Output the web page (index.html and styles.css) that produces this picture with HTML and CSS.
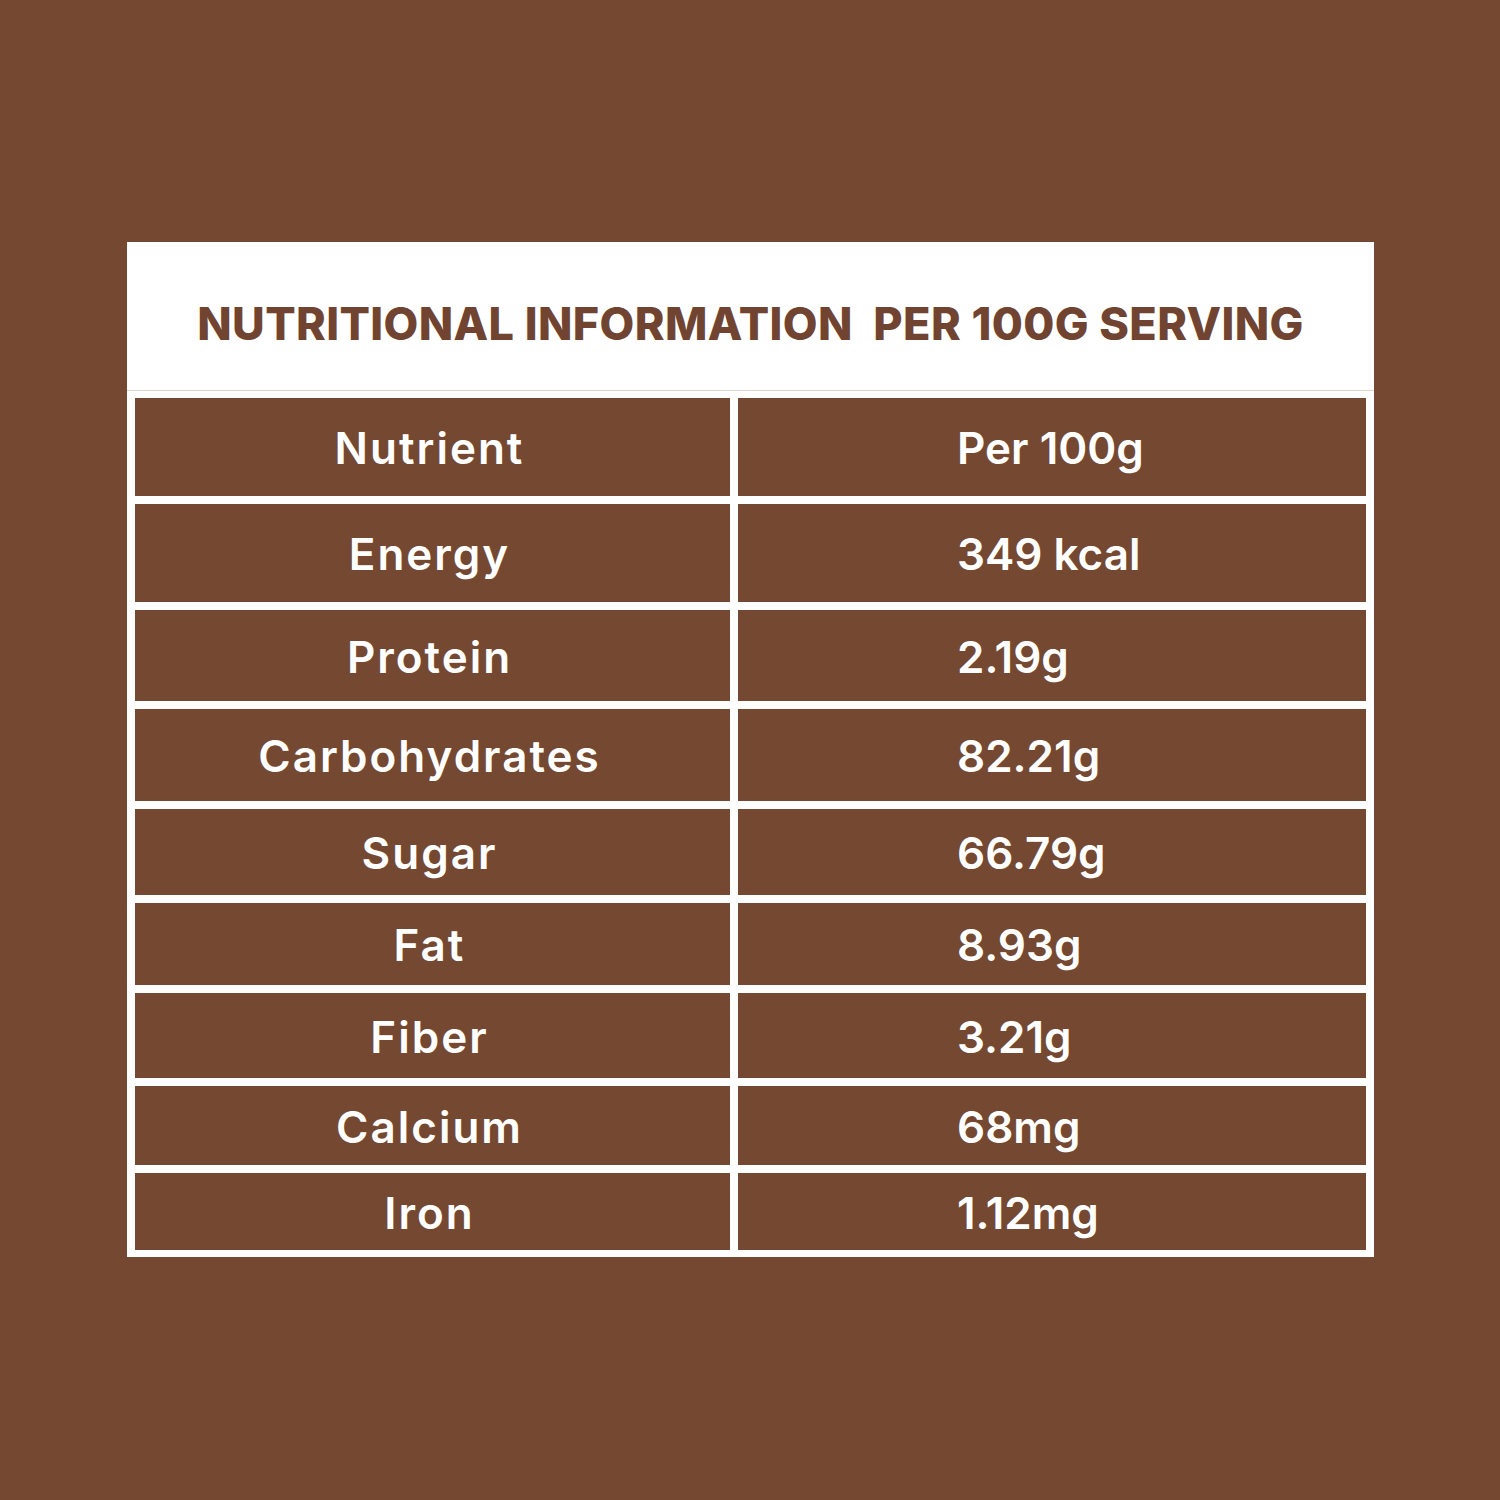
FILE: index.html
```html
<!DOCTYPE html>
<html lang="en">
<head>
<meta charset="utf-8">
<title>Nutritional Information</title>
<link rel="stylesheet" href="styles.css">
</head>
<body>
<main class="page">
  <section class="card">
    <header class="card-head">
      <h1 class="title">NUTRITIONAL INFORMATION&nbsp; PER 100G SERVING</h1>
    </header>
    <div class="table">
      <div class="cell name">Nutrient</div><div class="cell value">Per 100g</div>
      <div class="cell name">Energy</div><div class="cell value">349 kcal</div>
      <div class="cell name">Protein</div><div class="cell value">2.19g</div>
      <div class="cell name">Carbohydrates</div><div class="cell value">82.21g</div>
      <div class="cell name">Sugar</div><div class="cell value">66.79g</div>
      <div class="cell name">Fat</div><div class="cell value">8.93g</div>
      <div class="cell name">Fiber</div><div class="cell value">3.21g</div>
      <div class="cell name">Calcium</div><div class="cell value">68mg</div>
      <div class="cell name">Iron</div><div class="cell value">1.12mg</div>
    </div>
  </section>
</main>
</body>
</html>
```
FILE: styles.css
```css
html, body {
  margin: 0;
  padding: 0;
}
body {
  background: #744831;
  width: 1500px;
  height: 1500px;
  font-family: Inter, "Noto Sans", sans-serif;
}
.page {
  padding: 242px 126px 0 127px;
}
.card {
  width: 1247px;
  background: #ffffff;
  box-sizing: border-box;
}
.card-head {
  height: 149px;
  border-bottom: 1px solid #ddd6d0;
  display: flex;
  align-items: center;
  justify-content: center;
  padding-top: 14px;
  box-sizing: border-box;
}
.title {
  margin: 0;
  color: #704430;
  font-size: 45px;
  font-weight: 800;
  letter-spacing: 0.4px;
  white-space: nowrap;
}
.table {
  display: grid;
  grid-template-columns: 595px 628px;
  grid-template-rows: 98px 98px 91px 92px 86px 82px 85px 79px 77px;
  gap: 8px;
  padding: 7px 8px 7px 8px;
}
.cell {
  background: #744831;
  color: #ffffff;
  font-size: 44px;
  font-weight: 600;
  display: flex;
  align-items: center;
  padding-top: 2px;
  box-sizing: border-box;
}
.name {
  justify-content: center;
  padding-right: 6px;
  letter-spacing: 2px;
}
.value {
  padding-left: 219px;
  letter-spacing: 0;
}
```
